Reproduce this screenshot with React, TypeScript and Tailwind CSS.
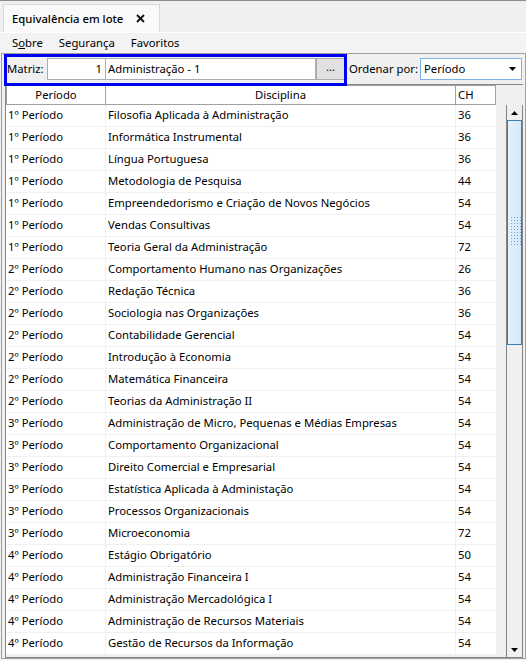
import React from "react";

const ROWS: [string, string, number][] = [
  ["1º Período", "Filosofia Aplicada à Administração", 36],
  ["1º Período", "Informática Instrumental", 36],
  ["1º Período", "Língua Portuguesa", 36],
  ["1º Período", "Metodologia de Pesquisa", 44],
  ["1º Período", "Empreendedorismo e Criação de Novos Negócios", 54],
  ["1º Período", "Vendas Consultivas", 54],
  ["1º Período", "Teoria Geral da Administração", 72],
  ["2º Período", "Comportamento Humano nas Organizações", 26],
  ["2º Período", "Redação Técnica", 36],
  ["2º Período", "Sociologia nas Organizações", 36],
  ["2º Período", "Contabilidade Gerencial", 54],
  ["2º Período", "Introdução à Economia", 54],
  ["2º Período", "Matemática Financeira", 54],
  ["2º Período", "Teorias da Administração II", 54],
  ["3º Período", "Administração de Micro, Pequenas e Médias Empresas", 54],
  ["3º Período", "Comportamento Organizacional", 54],
  ["3º Período", "Direito Comercial e Empresarial", 54],
  ["3º Período", "Estatística Aplicada à Administação", 54],
  ["3º Período", "Processos Organizacionais", 54],
  ["3º Período", "Microeconomia", 72],
  ["4º Período", "Estágio Obrigatório", 50],
  ["4º Período", "Administração Financeira I", 54],
  ["4º Período", "Administração Mercadológica I", 54],
  ["4º Período", "Administração de Recursos Materiais", 54],
  ["4º Período", "Gestão de Recursos da Informação", 54],
];

function Arrow({ up }: { up?: boolean }) {
  return (
    <svg width="7" height="4" viewBox="0 0 7 4">
      <path d={up ? "M0 4 L3.5 0 L7 4 Z" : "M0 0 L7 0 L3.5 4 Z"} fill="#000" />
    </svg>
  );
}

export default function App() {
  return (
    <div
      className="relative h-[660px] w-[526px] overflow-hidden border-t border-[#8c8c8c] bg-[#f0f0f0] text-[11.3px] text-black"
      style={{ fontFamily: '"Noto Sans", "Open Sans", sans-serif' }}
    >
      {/* tab strip */}
      <div className="flex h-[31px] items-end pl-[3px]">
        <div className="flex h-[28px] w-[157px] items-center gap-[13px] border border-b-0 border-[#d9d9d9] bg-[#f9f9f9] pl-[8px]">
          <span className="font-medium leading-none">Equivalência em lote</span>
          <svg width="9" height="9" viewBox="0 0 9 9">
            <path d="M1 1 L8 8 M8 1 L1 8" stroke="#111" strokeWidth="1.8" />
          </svg>
        </div>
      </div>

      {/* menu */}
      <div className="flex h-[21px] items-center border-t border-white bg-[#f3f3f3] pl-[12px]">
        <span className="mr-[16px]">
          S<span className="underline">o</span>bre
        </span>
        <span className="mr-[16px]">Segurança</span>
        <span>Favoritos</span>
      </div>

      {/* panel */}
      <div className="ml-[1px] h-[606px] w-[525px] border border-[#a0a0a0] bg-[#f0f0f0]">
        <div className="flex h-[30px] items-center">
          <span className="ml-[5px] w-[40px]">Matriz:</span>
          <div className="flex h-[22px] w-[59px] items-center justify-end border border-[#abadb3] bg-white pr-[3px]">
            1
          </div>
          <div className="flex h-[22px] w-[210px] items-center border border-l-0 border-[#abadb3] bg-white pl-[2px]">
            Administração - 1
          </div>
          <div className="flex h-[22px] w-[29px] items-center justify-center border border-[#adadad] bg-[#e1e1e1] pb-[3px]">
            ...
          </div>
          <span className="ml-[4px] w-[71px] whitespace-nowrap">Ordenar por:</span>
          <div className="flex h-[22px] w-[102px] items-center justify-between border border-[#7eb4ea] bg-white pl-[3px] pr-[5px]">
            <span>Período</span>
            <Arrow />
          </div>
        </div>

        {/* table */}
        <div className="ml-[3px] flex h-[574px] w-[518px] border-b border-l border-t border-[#828790]">
          <div className="w-[490px]">
            <div className="flex h-[20px] bg-white">
              <div className="flex w-[100px] items-center justify-center border border-[#a0a0a0]">Período</div>
              <div className="flex w-[350px] items-center justify-center border border-l-0 border-[#a0a0a0]">Disciplina</div>
              <div className="flex w-[40px] items-center border border-l-0 border-[#a0a0a0] pl-[2px]">CH</div>
            </div>
            {ROWS.map(([p, d, ch], i) => (
              <div key={i} className="flex h-[22px] border-b border-[#f0f0f0] bg-white">
                <div className="flex w-[100px] items-center border-r border-[#f0f0f0] pl-[2px]">{p}</div>
                <div className="flex w-[350px] items-center border-r border-[#f0f0f0] pl-[2px]">{d}</div>
                <div className="flex w-[40px] items-center pl-[2px]">{ch}</div>
              </div>
            ))}
          </div>

          {/* scrollbar */}
          <div className="ml-[10px] mt-[20px] flex w-[17px] flex-col border-x border-[#838383] bg-[#f0f0f0]">
            <div className="flex h-[15px] items-center justify-center">
              <Arrow up />
            </div>
            <div className="relative h-[225px] border border-[#3c7fb1] bg-gradient-to-r from-[#e5f1fb] to-[#d6e8f9]">
              <div className="absolute left-[3px] top-[96px] grid grid-cols-4 gap-[2px]">
                {Array.from({ length: 40 }).map((_, k) => (
                  <div key={k} className="h-[1px] w-[1px] bg-[#6fa3d6]" />
                ))}
              </div>
            </div>
            <div className="flex-1" />
            <div className="flex h-[14px] items-center justify-center">
              <Arrow />
            </div>
          </div>
        </div>
      </div>

      {/* highlight overlay */}
      <div className="pointer-events-none absolute left-[4px] top-[53px] h-[32px] w-[343px] border-[3px] border-[#0000f0]" />
    </div>
  );
}
